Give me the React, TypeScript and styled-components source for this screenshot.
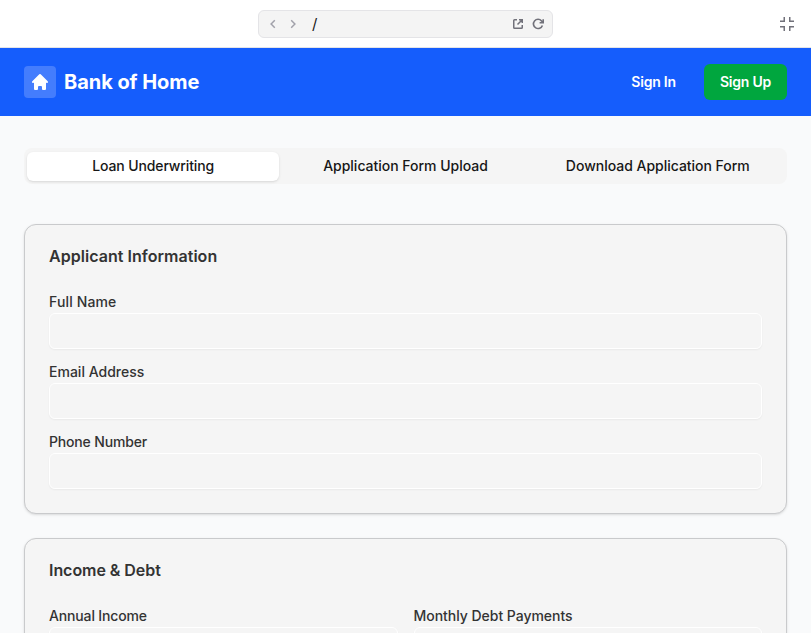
import React from "react";
import styled, { createGlobalStyle } from "styled-components";

const GlobalStyle = createGlobalStyle`
  *, *::before, *::after { box-sizing: border-box; }
  html, body { margin: 0; height: 100%; overflow: hidden; }
  body { background: #f9fafb; font-family: Inter, "Liberation Sans", sans-serif; color: #171717; }
  button, input { font: inherit; color: inherit; }
`;

const Page = styled.div`
  height: 100vh;
  overflow: hidden;
`;

const Toolbar = styled.div`
  display: grid;
  grid-template-columns: 1fr 295px 1fr;
  align-items: center;
  height: 48px;
  padding: 0 16px;
  background: #fff;
  border-bottom: 1px solid #e4e4e7;
`;

const AddressBar = styled.div`
  grid-column: 2;
  display: flex;
  align-items: center;
  height: 28px;
  padding: 0 8px 0 9px;
  border: 1px solid #e4e4e7;
  border-radius: 6px;
  background: #f4f4f4;
`;

const NavIcon = styled.svg<{ $muted?: boolean }>`
  display: block;
  flex: none;
  color: ${(p) => (p.$muted ? "#a1a1aa" : "#71717a")};
`;

const NavGroup = styled.div<{ $gap: number }>`
  display: flex;
  gap: ${(p) => p.$gap}px;
`;

const Path = styled.span`
  flex: 1;
  margin-left: 14px;
  font-size: 15px;
  line-height: 20px;
`;

const Collapse = styled.div`
  justify-self: end;
`;

const Header = styled.header`
  display: flex;
  align-items: center;
  justify-content: space-between;
  height: 68px;
  padding: 0 24px;
  background: #155dfc;
  color: #fff;
`;

const Brand = styled.div`
  display: flex;
  align-items: center;
  gap: 8px;
`;

const Logo = styled.div`
  display: grid;
  place-items: center;
  width: 32px;
  height: 32px;
  border-radius: 4px;
  background: #447dfd;
`;

const BrandName = styled.span`
  font-size: 20px;
  line-height: 28px;
  font-weight: 700;
  letter-spacing: -0.05px;
`;

const Actions = styled.div`
  display: flex;
  gap: 12px;
`;

const HeaderButton = styled.button<{ $filled?: boolean }>`
  height: 36px;
  padding: 0 16px;
  border: 0;
  border-radius: 6px;
  background: ${(p) => (p.$filled ? "#00a63e" : "transparent")};
  font-size: 14px;
  line-height: 20px;
  font-weight: 600;
  letter-spacing: -0.22px;
  white-space: nowrap;
`;

const Main = styled.main`
  padding: 32px 24px;
`;

const Tabs = styled.div`
  display: flex;
  align-items: center;
  height: 36px;
  margin-bottom: 40px;
  padding: 3px;
  border-radius: 8px;
  background: #f5f5f5;
`;

const Tab = styled.button<{ $active?: boolean; $spacing: number }>`
  flex: 1;
  height: 29px;
  padding: 0;
  border: 0;
  border-radius: 6px;
  background: ${(p) => (p.$active ? "#fff" : "transparent")};
  box-shadow: ${(p) => (p.$active ? "0 1px 3px rgba(0,0,0,.1), 0 1px 2px -1px rgba(0,0,0,.1)" : "none")};
  font-size: 14px;
  line-height: 20px;
  font-weight: 450;
  letter-spacing: ${(p) => p.$spacing}px;
  white-space: nowrap;
`;

const Card = styled.section`
  margin-bottom: 24px;
  padding: 19px 24px 24px;
  border: 1px solid #c9cacc;
  border-radius: 12px;
  background: #f5f5f5;
  color: #333;
  box-shadow: 0 1px 3px rgba(0,0,0,.1), 0 1px 2px -1px rgba(0,0,0,.1);
`;

const CardTitle = styled.h2<{ $spacing: number }>`
  margin: 0 0 27px;
  font-size: 16px;
  line-height: 24px;
  font-weight: 600;
  letter-spacing: ${(p) => p.$spacing}px;
`;

const Fields = styled.div<{ $columns: number }>`
  display: grid;
  grid-template-columns: repeat(${(p) => p.$columns}, 1fr);
  gap: 16px;
`;

const Field = styled.label<{ $spacing: number }>`
  display: flex;
  flex-direction: column;
  gap: 4px;
  font-size: 14px;
  line-height: 14px;
  font-weight: 450;
  letter-spacing: ${(p) => p.$spacing}px;
`;

const Input = styled.input`
  width: 100%;
  height: 36px;
  padding: 4px 12px;
  border: 1px solid #fff;
  border-radius: 6px;
  background: transparent;
  box-shadow: 0 1px 2px rgba(0,0,0,.05);
  outline: none;
`;

export default function App() {
  return (
    <Page>
      <GlobalStyle />
      <Toolbar>
        <AddressBar>
          <NavGroup $gap={10}>
            <NavIcon $muted width="10" height="10" viewBox="0 0 10 10" fill="none" stroke="currentColor" strokeWidth="1.5">
              <path d="M6.8 1.3 3.1 5l3.7 3.7" />
            </NavIcon>
            <NavIcon $muted width="10" height="10" viewBox="0 0 10 10" fill="none" stroke="currentColor" strokeWidth="1.5">
              <path d="M3.2 1.3 6.9 5 3.2 8.7" />
            </NavIcon>
          </NavGroup>
          <Path>/</Path>
          <NavGroup $gap={8}>
            <NavIcon width="12" height="12" viewBox="0 0 12 12" fill="none" stroke="currentColor" strokeWidth="1.5">
              <path d="M5 1.75H2.5a.75.75 0 0 0-.75.75v7c0 .4.35.75.75.75h7a.75.75 0 0 0 .75-.75V7M7 1.75h3.25V5M10 2 5.5 6.5" />
            </NavIcon>
            <NavIcon width="12" height="12" viewBox="0 0 12 12" fill="none" stroke="currentColor" strokeWidth="1.6">
              <path d="M10.4 7.4A4.6 4.6 0 1 1 9.6 3L11 4.5M11.2 1.2v3.5H7.6" />
            </NavIcon>
          </NavGroup>
        </AddressBar>
        <Collapse>
          <NavIcon width="16" height="16" viewBox="0 0 16 16" fill="none" stroke="currentColor" strokeWidth="1.5">
            <path d="M5.25 1v4.25H1M10.75 1v4.25H15M5.25 15v-4.25H1M10.75 15v-4.25H15" />
          </NavIcon>
        </Collapse>
      </Toolbar>
      <Header>
        <Brand>
          <Logo>
            <svg width="20" height="20" viewBox="0 0 20 20" fill="#fff">
              <path d="M10.707 2.293a1 1 0 00-1.414 0l-7 7a1 1 0 001.414 1.414L4 10.414V17a1 1 0 001 1h2a1 1 0 001-1v-2a1 1 0 011-1h2a1 1 0 011 1v2a1 1 0 001 1h2a1 1 0 001-1v-6.586l.293.293a1 1 0 001.414-1.414l-7-7z" />
            </svg>
          </Logo>
          <BrandName>Bank of Home</BrandName>
        </Brand>
        <Actions>
          <HeaderButton>Sign In</HeaderButton>
          <HeaderButton $filled>Sign Up</HeaderButton>
        </Actions>
      </Header>
      <Main>
        <Tabs>
          <Tab $active $spacing={-0.12}>Loan Underwriting</Tab>
          <Tab $spacing={-0.02}>Application Form Upload</Tab>
          <Tab $spacing={-0.02}>Download Application Form</Tab>
        </Tabs>
        <Card>
          <CardTitle $spacing={0.04}>Applicant Information</CardTitle>
          <Fields $columns={1}>
            <Field $spacing={0.14}>Full Name<Input /></Field>
            <Field $spacing={0.01}>Email Address<Input /></Field>
            <Field $spacing={-0.17}>Phone Number<Input /></Field>
          </Fields>
        </Card>
        <Card>
          <CardTitle $spacing={-0.05}>Income &amp; Debt</CardTitle>
          <Fields $columns={2}>
            <Field $spacing={-0.15}>Annual Income<Input /></Field>
            <Field $spacing={-0.03}>Monthly Debt Payments<Input /></Field>
          </Fields>
        </Card>
      </Main>
    </Page>
  );
}
